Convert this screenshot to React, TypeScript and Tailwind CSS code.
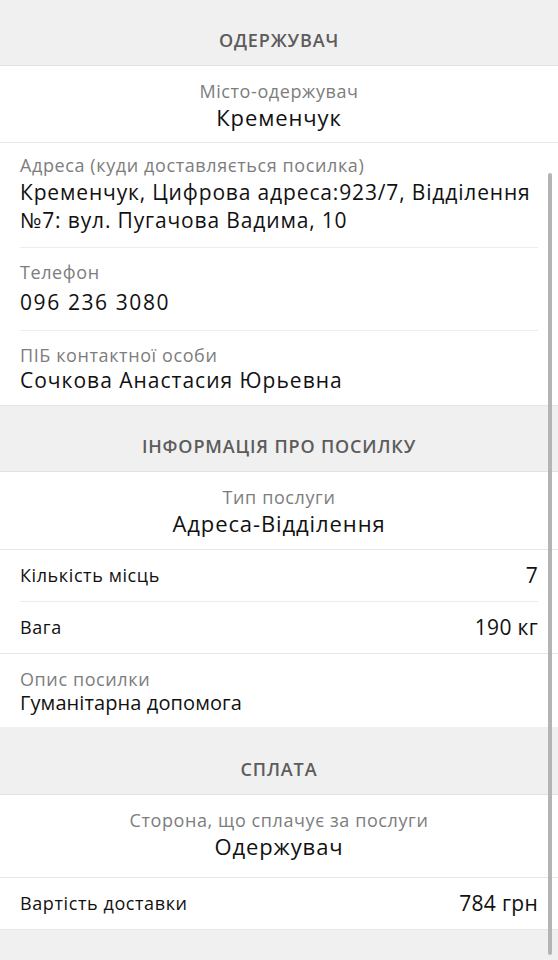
import React from "react";

const font = { fontFamily: '"Open Sans", "Noto Sans", sans-serif' };

function Header({ title, tall }: { title: string; tall?: boolean }) {
  return (
    <div
      className={`bg-[#f0f0f0] border-b border-[#e2e2e2] flex justify-center ${tall ? "h-[68px] pt-[31px]" : "h-[66px] pt-[29px]"}`}
    >
      <span className="text-[18px] leading-[22px] font-semibold text-[#5c5c5c] tracking-[0.85px]">{title}</span>
    </div>
  );
}

function CenterField({ label, value, cls }: { label: string; value: string; cls: string }) {
  return (
    <div className={`bg-white border-b border-[#e6e6e6] flex flex-col items-center ${cls}`}>
      <span className="text-[18px] leading-[20px] text-[#7d7d7d] tracking-[0.6px]">{label}</span>
      <span className="text-[22px] leading-[28px] font-medium text-[#111] mt-[2px] tracking-[0.9px]">{value}</span>
    </div>
  );
}

function LeftField({
  label,
  children,
  cls,
  vcls,
  inset,
}: {
  label: string;
  children: React.ReactNode;
  cls: string;
  vcls: string;
  inset?: boolean;
}) {
  return (
    <div className="bg-white px-5">
      <div className={`flex flex-col ${cls} ${inset ? "border-b border-[#ececec]" : ""}`}>
        <span className="text-[18px] leading-[20px] text-[#7d7d7d] tracking-[0.6px]">{label}</span>
        <span className={`leading-[28px] text-[#111] ${vcls}`}>{children}</span>
      </div>
    </div>
  );
}

function Row({ label, value, inset, h }: { label: string; value: string; inset?: boolean; h: string }) {
  return (
    <div className={`bg-white px-5 ${inset ? "" : "border-b border-[#e6e6e6]"}`}>
      <div className={`${h} flex items-center justify-between ${inset ? "border-b border-[#ececec]" : ""}`}>
        <span className="text-[18px] text-[#111] tracking-[0.6px]">{label}</span>
        <span className="text-[21px] text-[#111] tracking-[0.3px]">{value}</span>
      </div>
    </div>
  );
}

export default function App() {
  return (
    <div className="relative w-[558px] h-[960px] overflow-hidden bg-[#f0f0f0]" style={font}>
      <Header title="ОДЕРЖУВАЧ" />
      <CenterField label="Місто-одержувач" value="Кременчук" cls="pt-[15px] pb-[11px]" />
      <LeftField
        label="Адреса (куди доставляється посилка)"
        cls="pt-[12px] pb-[13px]"
        vcls="mt-[3px] text-[21px] tracking-[0.85px]"
        inset
      >
        Кременчук, Цифрова адреса:923/7, Відділення №7: вул. Пугачова Вадима, 10
      </LeftField>
      <LeftField label="Телефон" cls="pt-[14px] pb-[14px]" vcls="mt-[6px] text-[21px] tracking-[1.6px]" inset>
        096 236 3080
      </LeftField>
      <div className="border-b border-[#e6e6e6]">
        <LeftField
          label="ПІБ контактної особи"
          cls="pt-[14px] pb-[11px]"
          vcls="mt-[1px] text-[21px] tracking-[1px]"
        >
          Сочкова Анастасия Юрьевна
        </LeftField>
      </div>
      <Header title="ІНФОРМАЦІЯ ПРО ПОСИЛКУ" />
      <CenterField label="Тип послуги" value="Адреса-Відділення" cls="pt-[15px] pb-[12px]" />
      <Row label="Кількість місць" value="7" inset h="h-[52px]" />
      <Row label="Вага" value="190 кг" h="h-[51px]" />
      <LeftField label="Опис посилки" cls="pt-[15px] pb-[10px]" vcls="text-[20px] tracking-[0.1px]">
        Гуманітарна допомога
      </LeftField>
      <Header title="СПЛАТА" tall />
      <CenterField label="Сторона, що сплачує за послуги" value="Одержувач" cls="pt-[15px] pb-[17px]" />
      <Row label="Вартість доставки" value="784 грн" h="h-[51px]" />
      <div className="absolute left-[548px] top-[173px] w-[4px] h-[782px] rounded-full bg-[#b4b4b4]" />
    </div>
  );
}
